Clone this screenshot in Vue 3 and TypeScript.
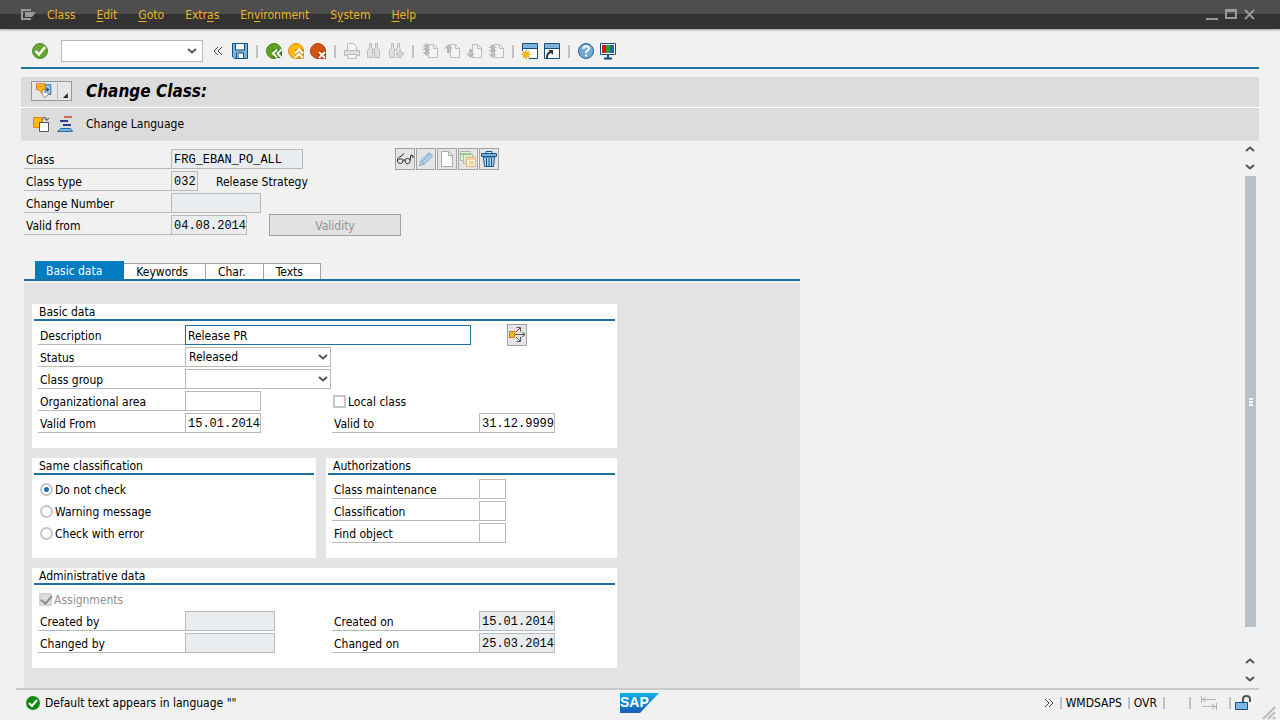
<script setup lang="ts">
import { ref } from 'vue'

interface MenuItem {
  before: string
  key: string
  after: string
}

const menus: MenuItem[] = [
  { before: 'Class', key: '', after: '' },
  { before: '', key: 'E', after: 'dit' },
  { before: '', key: 'G', after: 'oto' },
  { before: 'Extr', key: 'a', after: 's' },
  { before: 'En', key: 'v', after: 'ironment' },
  { before: 'S', key: 'y', after: 'stem' },
  { before: '', key: 'H', after: 'elp' },
]

const page = '<path d="M7.500 2.500h5l4 4v9h-9z" fill="#f4f4f4" stroke="#bcbcbc"/><path d="M12.500 2.500v4h4" fill="none" stroke="#bcbcbc"/>'
const binocular =
  '<path d="M4.500 1.500h2v4l1 1v9h-5v-7l2-3zM10.500 1.500h2v4l2 3v7h-5v-9l1-1z" fill="#e0e0e0" stroke="#bcbcbc"/><path d="M7 7.500h3M7 10.500h3" stroke="#bcbcbc"/>'

const icons: Record<string, string> = {
  save:
    '<path d="M1.500 1.500h15v15h-13l-2-2z" fill="#7fb2da" stroke="#12517f"/><path d="M4.500 2v6h9V2" fill="#f5fafd" stroke="#12517f"/><path d="M5.500 16v-5h7v5" fill="#f5fafd" stroke="#12517f"/><path d="M6 12h2v4H6z" fill="#7fb2da"/>',
  back:
    '<circle cx="9" cy="9" r="7.500" fill="#5da11f" stroke="#43821a"/><path d="M8 7h9v9H8z" fill="#3b7a14"/><path d="M12 7.500l-4 4 4 4M16.500 7.500l-4 4 4 4" fill="none" stroke="#fff" stroke-width="2"/>',
  exit:
    '<circle cx="9" cy="9" r="7.500" fill="#fcb815" stroke="#dc8d05"/><path d="M8 7h9v10H8z" fill="#d8900c"/><path d="M8 11.500l4-4 4 4M8 16l4-4 4 4" fill="none" stroke="#fff" stroke-width="2"/>',
  cancel:
    '<circle cx="9" cy="9" r="7.500" fill="#d65215" stroke="#b43f0c"/><path d="M9 9h8v8H9z" fill="#b33c0a"/><path d="M10 10l6 6M16 10l-6 6" stroke="#fff" stroke-width="2"/>',
  print:
    '<path d="M4.500 8.500v-7h6l3 3v4" fill="#f5f5f5" stroke="#bcbcbc"/><path d="M1.500 8.500h15v5h-15z" fill="#dedede" stroke="#bcbcbc"/><path d="M4.500 12.500h9v4h-9z" fill="#f5f5f5" stroke="#bcbcbc"/>',
  find: binocular,
  findNext: binocular + '<path d="M13 7v10M8 12h10" stroke="#f2f2f2" stroke-width="5"/><path d="M13 8v8M9 12h8" stroke="#bcbcbc" stroke-width="3"/><path d="M13 9v6M10 12h6" stroke="#e2e2e2"/>',
  first: page + '<path d="M5.500 1l4 4h-8zM5.500 4l4 4h-8zM4 7h3v3H4zM1.500 10h8l-4 4z" fill="#b8b8b8"/>',
  prev: page + '<path d="M5.500 2l4.500 4.500H1zM4 6h3v5H4z" fill="#b8b8b8"/>',
  next: page + '<path d="M5.500 16l4.500-4.500H1zM4 7h3v5H4z" fill="#b8b8b8"/>',
  last: page + '<path d="M5.500 2l4 4h-8zM4 6h3v4H4zM1.500 8h8l-4 4zM1.500 12h8l-4 4z" fill="#b8b8b8"/>',
  session:
    '<path d="M1.500 1.500h15v15h-15z" fill="#fff" stroke="#12517f"/><path d="M2 2h14v4H2z" fill="#7fb2da"/><path d="M1 6.500h16" stroke="#12517f"/><path d="M0 9h8v9H0z" fill="#f2f2f2"/><path d="M5 8v9M.500 12.500h9M2 9.500l6 6M8 9.500l-6 6" stroke="#f0a30a" stroke-width="1.500"/><circle cx="5" cy="12.500" r="2.500" fill="#fbb418"/>',
  shortcut:
    '<path d="M1.500 1.500h15v15h-15z" fill="#fff" stroke="#12517f"/><path d="M2 2h14v4H2z" fill="#7fb2da"/><path d="M1 6.500h16" stroke="#12517f"/><path d="M4 16c0-4 1-5 4-6" fill="none" stroke="#333" stroke-width="2"/><path d="M5 8h5v5z" fill="#333"/>',
  help:
    '<circle cx="9" cy="9" r="7.500" fill="#73a9d2" stroke="#23618f"/><path d="M6.500 7c0-3.500 5.500-3.500 5.500-.500 0 2-3 2-3 4.500M9 12.500v2" fill="none" stroke="#fff" stroke-width="2"/>',
  layout:
    '<path d="M1.500 1.500h15v11h-15z" fill="#fff" stroke="#12517f"/><path d="M3 3h4v8H3z" fill="#d31e18"/><path d="M7 3h4v8H7z" fill="#3a9b23"/><path d="M11 3h4v8h-4z" fill="#126db0"/><path d="M9 13v3M5 16.500h8" stroke="#12517f" stroke-width="2"/>',
  check:
    '<circle cx="9" cy="9" r="7.500" fill="#64a633" stroke="#4f8a2b"/><path d="M4.500 9l3.500 3.500L14 5" fill="none" stroke="#fff" stroke-width="2.500"/>',
  display:
    '<path d="M1.500 9L8 3.500M1.500 9c-1 5 5 6 5.500 2 0-2-3-3-4-1M7 10.500c1-1 2-1 2 0M9 10c0 6 6 4 5 0-1-2-4-2-5 0M14 10l1-5 2 1v2" fill="none" stroke="#1a1a1a"/>',
  edit:
    '<path d="M2.500 15.500l1.500-5 8-8 3.500 3.500-8 8z" fill="#b2d2e8" stroke="#86aec9"/><path d="M4 11l3 3M5 12l8-8" stroke="#7caaca"/>',
  create: '<path d="M3.500 1.500h7l4 4v11h-11z" fill="#fdfdfd" stroke="#aaa"/><path d="M10.500 1.500v4h4" fill="none" stroke="#aaa"/>',
  copy:
    '<path d="M1.500 1.500h10v9h-10z" fill="#e6f2de" stroke="#a1c38f"/><path d="M1.500 4h10" stroke="#a1c38f" stroke-width="2"/><path d="M4.500 4.500h9v9h-9z" fill="#dcebd3" stroke="#a1c38f"/><path d="M7.500 7.500h9v9h-9z" fill="#fff0d8" stroke="#e9b67d"/><path d="M8 9h8M10 12h5M10 14h5" stroke="#e9b67d"/>',
  trash:
    '<path d="M6 3V1.500h6V3" fill="none" stroke="#165a8d"/><path d="M1.500 3.500h15v3h-15z" fill="#79b1dc" stroke="#165a8d"/><path d="M3.500 7h11l-1 9.500h-9z" fill="#a9cfea" stroke="#165a8d"/><path d="M6.500 8v8M9 8v8M11.500 8v8" stroke="#165a8d"/>',
  other:
    '<path d="M1.500 2.500h9v10h-9z" fill="#fbb615" stroke="#df8b0c"/><path d="M7.500 7.500h9v9h-9z" fill="#fff" stroke="#555"/><path d="M10 5c1-4 5-3 5 0M12.500 3.500l2.500 2 2-2.500" fill="none" stroke="#555"/>',
  hierarchy:
    '<path d="M8 2h8" stroke="#c8704b" stroke-width="2"/><path d="M4 6h8M7 10h8" stroke="#26458b" stroke-width="2"/><path d="M4.500 13.500h10l2 3h-15z" fill="#7fb2da" stroke="#1c70a8"/>',
  assist:
    '<path d="M10.500 2.500h6v10h-6z" fill="#9ac6e6" stroke="#2470a4"/><path d="M12 5l3 2.500-3 2.500z" fill="#124c78"/><path d="M1.500 1.500h9v6h-3v4l-4-4h-2z" fill="#ffbf25" stroke="#d37a0c"/><path d="M3 4.500h6" stroke="#b45b10" stroke-dasharray="1 1"/><path d="M7 11l3 5 4-3-1-2" fill="#fff" stroke="#888"/>',
  multi:
    '<path d="M1.500 5.500h5v6h-5z" fill="#fbb92b" stroke="#cf7913"/><path d="M7 8.500h10M14 6l3 2.500-3 2.500M8 6l4-4M8.500 1.500h4v4M8 11l4 4M12.500 11v4.500h-4" fill="none" stroke="#555"/>',
}

const toolbar: string[] = [
  'save', '|', 'back', 'exit', 'cancel', '|', 'print', 'find', 'findNext', '|',
  'first', 'prev', 'next', 'last', '|', 'session', 'shortcut', '|', 'help', 'layout',
]
const unavailable = ['print', 'find', 'findNext', 'first', 'prev', 'next', 'last']
const objectTools = ['display', 'edit', 'create', 'copy', 'trash']

const tabs = ['Basic data', 'Keywords', 'Char.', 'Texts']
const activeTab = ref('Basic data')

const command = ref('')
const description = ref('Release PR')
const status = ref('Released')
const classGroup = ref('')
const orgArea = ref('')
const localClass = ref(false)
const validFrom = ref('15.01.2014')
const validTo = ref('31.12.9999')

const checks = ['Do not check', 'Warning message', 'Check with error']
const check = ref('Do not check')
const authorizations = ['Class maintenance', 'Classification', 'Find object']
</script>

<template>
  <div class="window">
    <header class="menubar">
      <svg class="menu-icon" viewBox="0 0 16 13" aria-hidden="true">
        <path d="M10 2H1v9h9" fill="none" stroke="#999" stroke-width="2" />
        <path d="M4 4h11l-4 5H4z" fill="#999" />
      </svg>
      <nav class="menus">
        <button v-for="m in menus" :key="m.before + m.key" type="button" class="menu">{{ m.before }}<u v-if="m.key">{{ m.key }}</u>{{ m.after }}</button>
      </nav>
      <div class="controls">
        <button type="button" aria-label="Minimize"><svg viewBox="0 0 12 12"><path d="M0 10h12" stroke="#999" stroke-width="2" /></svg></button>
        <button type="button" aria-label="Maximize"><svg viewBox="0 0 12 12"><path d="M1 1h10v8H1zM1 2h10" fill="none" stroke="#999" stroke-width="2" /></svg></button>
        <button type="button" aria-label="Close"><svg viewBox="0 0 12 12"><path d="M1 1l9 9M10 1l-9 9" stroke="#999" stroke-width="2" /></svg></button>
      </div>
    </header>

    <div class="toolbar">
      <button type="button" class="tool" aria-label="Enter"><svg viewBox="0 0 18 18" v-html="icons.check" /></button>
      <div class="select command">
        <input v-model="command" type="text" aria-label="Command" />
        <svg class="chevron" viewBox="0 0 10 6"><path d="M1 1l4 3.500L9 1" /></svg>
      </div>
      <button type="button" class="collapse" aria-label="Hide command field">
        <svg viewBox="0 0 10 10"><path d="M5 1L1 5l4 4M9 1L5 5l4 4" fill="none" stroke="#444" /></svg>
      </button>
      <template v-for="(t, i) in toolbar" :key="i">
        <span v-if="t === '|'" class="sep" />
        <button v-else type="button" class="tool" :aria-label="t" :disabled="unavailable.includes(t)">
          <svg viewBox="0 0 18 18" v-html="icons[t]" />
        </button>
      </template>
    </div>

    <div class="titlebar">
      <button type="button" class="services" aria-label="Services for object">
        <svg class="assist" viewBox="0 0 18 18" v-html="icons.assist" />
        <span class="split" />
        <svg class="corner" viewBox="0 0 5 5"><path d="M5 0v5H0z" fill="#222" /></svg>
      </button>
      <h1>Change Class:</h1>
    </div>
    <div class="appbar">
      <button type="button" class="tool" aria-label="Other class"><svg viewBox="0 0 18 18" v-html="icons.other" /></button>
      <button type="button" class="tool" aria-label="Hierarchy"><svg viewBox="0 0 18 18" v-html="icons.hierarchy" /></button>
      <button type="button" class="language">Change Language</button>
    </div>

    <div class="body">
      <main class="content">
        <form class="head" @submit.prevent>
          <div class="row">
            <label for="class">Class</label>
            <input id="class" class="mono w-class" value="FRG_EBAN_PO_ALL" readonly />
            <div class="object-tools">
              <button v-for="t in objectTools" :key="t" type="button" class="icon-button" :aria-label="t">
                <svg viewBox="0 0 18 18" v-html="icons[t]" />
              </button>
            </div>
          </div>
          <div class="row">
            <label for="type">Class type</label>
            <input id="type" class="mono w-code" value="032" readonly />
            <span class="note">Release Strategy</span>
          </div>
          <div class="row">
            <label for="number">Change Number</label>
            <input id="number" class="mono w-user" value="" readonly />
          </div>
          <div class="row">
            <label for="from">Valid from</label>
            <input id="from" class="mono w-date" value="04.08.2014" readonly />
            <button type="button" class="validity" disabled>Validity</button>
          </div>
        </form>

        <div class="tabs" role="tablist">
          <button
            v-for="t in tabs"
            :key="t"
            type="button"
            role="tab"
            class="tab"
            :class="{ active: t === activeTab }"
            :aria-selected="t === activeTab"
            @click="activeTab = t"
          >{{ t }}</button>
        </div>

        <section class="panel" role="tabpanel">
          <div class="groups">
            <section class="group wide">
              <h2>Basic data</h2>
              <div class="rows">
                <div class="row">
                  <label for="desc">Description</label>
                  <input id="desc" v-model="description" class="w-desc" />
                  <button type="button" class="icon-button multi" aria-label="Maintain texts">
                    <svg viewBox="0 0 18 18" v-html="icons.multi" />
                  </button>
                </div>
                <div class="row">
                  <label for="status">Status</label>
                  <div class="select">
                    <select id="status" v-model="status">
                      <option>Released</option>
                      <option>Locked</option>
                    </select>
                    <svg class="chevron" viewBox="0 0 10 6"><path d="M1 1l4 3.500L9 1" /></svg>
                  </div>
                </div>
                <div class="row">
                  <label for="group">Class group</label>
                  <div class="select">
                    <select id="group" v-model="classGroup"><option value=""></option></select>
                    <svg class="chevron" viewBox="0 0 10 6"><path d="M1 1l4 3.500L9 1" /></svg>
                  </div>
                </div>
                <div class="pair">
                  <div class="row">
                    <label for="org">Organizational area</label>
                    <input id="org" v-model="orgArea" class="mono w-date" />
                  </div>
                  <label class="tick"><input v-model="localClass" type="checkbox" />Local class</label>
                </div>
                <div class="pair">
                  <div class="row">
                    <label for="vfrom">Valid From</label>
                    <input id="vfrom" v-model="validFrom" class="mono w-date" />
                  </div>
                  <div class="row">
                    <label for="vto">Valid to</label>
                    <input id="vto" v-model="validTo" class="mono w-date" />
                  </div>
                </div>
              </div>
            </section>

            <section class="group">
              <h2>Same classification</h2>
              <div class="rows">
                <label v-for="c in checks" :key="c" class="tick radio">
                  <input v-model="check" type="radio" name="check" :value="c" />{{ c }}
                </label>
              </div>
            </section>

            <section class="group">
              <h2>Authorizations</h2>
              <div class="rows">
                <div v-for="(a, i) in authorizations" :key="a" class="row">
                  <label :for="'auth' + i">{{ a }}</label>
                  <input :id="'auth' + i" class="mono w-code" />
                </div>
              </div>
            </section>

            <section class="group wide">
              <h2>Administrative data</h2>
              <div class="rows">
                <label class="tick off"><input type="checkbox" checked disabled />Assignments</label>
                <div class="pair">
                  <div class="row">
                    <label for="cby">Created by</label>
                    <input id="cby" class="mono w-user" readonly />
                  </div>
                  <div class="row">
                    <label for="con">Created on</label>
                    <input id="con" class="mono w-date" value="15.01.2014" readonly />
                  </div>
                </div>
                <div class="pair">
                  <div class="row">
                    <label for="chby">Changed by</label>
                    <input id="chby" class="mono w-user" readonly />
                  </div>
                  <div class="row">
                    <label for="chon">Changed on</label>
                    <input id="chon" class="mono w-date" value="25.03.2014" readonly />
                  </div>
                </div>
              </div>
            </section>
          </div>
        </section>
      </main>

      <div class="scrollbar">
        <button type="button" aria-label="Scroll up"><svg class="arrow" viewBox="0 0 10 6"><path d="M1 5l4-3.500L9 5" /></svg></button>
        <button type="button" aria-label="Line down"><svg class="arrow" viewBox="0 0 10 6"><path d="M1 1l4 3.500L9 1" /></svg></button>
        <div class="track"><div class="thumb"><i /><i /><i /></div></div>
        <button type="button" aria-label="Line up"><svg class="arrow" viewBox="0 0 10 6"><path d="M1 5l4-3.500L9 5" /></svg></button>
        <button type="button" aria-label="Scroll down"><svg class="arrow" viewBox="0 0 10 6"><path d="M1 1l4 3.500L9 1" /></svg></button>
      </div>
    </div>

    <footer class="statusbar">
      <div class="message">
        <svg viewBox="0 0 14 14"><circle cx="7" cy="7" r="7" fill="#128a12" /><path d="M3 7l3 3 5-6" fill="none" stroke="#fff" stroke-width="2" /></svg>
        <span>Default text appears in language ""</span>
      </div>
      <svg class="logo" viewBox="0 0 39 20" role="img" aria-label="SAP">
        <defs>
          <linearGradient id="sap" x1="0" y1="0" x2="0" y2="1">
            <stop offset="0" stop-color="#0bb0ea" />
            <stop offset="1" stop-color="#1d5cb6" />
          </linearGradient>
        </defs>
        <path d="M0 0h39L20 20H0z" fill="url(#sap)" />
        <text x="0" y="14">SAP</text>
      </svg>
      <div class="system">
        <svg class="more" viewBox="0 0 10 10"><path d="M1 1l4 4-4 4M5 1l4 4-4 4" fill="none" stroke="#444" /></svg>
        <span class="cell">WMDSAPS</span>
        <span class="cell">OVR</span>
        <span class="cell blank" />
        <span class="cell">
          <svg class="transfer" viewBox="0 0 18 14"><path d="M1.500 0v7M2 3.500h14M6 1L2.500 3.500 6 6M16.500 7v7M2 10.500h14M12 8l3.500 2.500L12 13" fill="none" stroke="#b5b5b5" /></svg>
        </span>
        <span class="cell">
          <svg class="lock" viewBox="0 0 17 16"><path d="M8 7V4c0-4 7-4 7 0v3" fill="none" stroke="#555" stroke-width="2" /><path d="M.500 7.500h12v7H.500z" fill="#7db6e0" stroke="#12517f" /></svg>
        </span>
      </div>
      <svg class="grip" viewBox="0 0 14 14"><path d="M1 13L13 1M6 13l7-7M11 13l2-2" stroke="#bbb" stroke-width="2" /></svg>
    </footer>
  </div>
</template>

<style>
body {
  margin: 0;
  background: #f1f1f1;
}
</style>

<style scoped>
.window {
  display: flex;
  flex-direction: column;
  min-height: 100vh;
  background: #f1f1f1;
  color: #000;
  font: 12px/16px "DejaVu Sans Condensed", "Noto Sans", sans-serif;
}
.window * {
  box-sizing: border-box;
}
button,
input,
select {
  margin: 0;
  padding: 0;
  border: 0;
  border-radius: 0;
  outline: 0;
  background: none;
  color: inherit;
  font: inherit;
}
svg {
  display: block;
}
h1,
h2 {
  margin: 0;
}

/* Menu bar */
.menubar {
  display: flex;
  align-items: center;
  height: 29px;
  padding: 0 24px 0 21px;
  background: linear-gradient(#4e4e4e 14px, #333 14px);
  box-shadow: 0 1px 2px #999;
}
.menu-icon {
  width: 16px;
  height: 13px;
}
.menus {
  display: flex;
  flex: 1;
  gap: 21px;
  padding-left: 10px;
}
.menu {
  color: #ecb51d;
}
.menu u {
  text-underline-offset: 2px;
}
.controls {
  display: flex;
  gap: 7px;
}
.controls svg {
  width: 12px;
  height: 12px;
}

/* System toolbar */
.toolbar {
  display: flex;
  align-items: center;
  gap: 4px;
  height: 40px;
  margin: 0 21px;
  padding: 6px 0 0 10px;
  border-bottom: 2px solid #1f719f;
}
.tool svg {
  width: 18px;
  height: 18px;
}
.sep {
  width: 2px;
  height: 13px;
  margin: 0 3px;
  background: #c2c2c2;
}
.select {
  position: relative;
  width: 146px;
}
.select select,
.select input {
  display: block;
  width: 100%;
  height: 20px;
  padding: 0 20px 1px 3px;
  border: 1px solid #b9b9b9;
  background: #fff;
  appearance: none;
}
.command {
  width: 142px;
  margin: 0 6px 0 8px;
}
.select.command input {
  height: 22px;
}
.chevron {
  position: absolute;
  top: 50%;
  right: 3px;
  width: 10px;
  height: 6px;
  margin-top: -3px;
  pointer-events: none;
}
.command .chevron {
  right: 6px;
}
.chevron path,
.arrow path {
  fill: none;
  stroke: #555;
  stroke-width: 2;
}
.collapse {
  margin-right: 4px;
}
.collapse svg,
.more {
  width: 10px;
  height: 10px;
}

/* Title and application toolbar */
.titlebar {
  display: flex;
  align-items: center;
  height: 30px;
  margin: 8px 21px 1px;
  padding: 0 10px 2px;
  background: #dcdcdc;
  box-shadow: 0 1px #fff;
}
.services {
  display: flex;
  align-items: center;
  width: 41px;
  height: 20px;
  padding: 0 3px;
  border: 1px solid #8e9ba5;
  background: #e6e6e6;
}
.assist {
  width: 18px;
  height: 18px;
}
.split {
  width: 1px;
  height: 16px;
  margin: 0 5px;
  background: #bbb;
}
.corner {
  width: 5px;
  height: 5px;
  margin-top: 8px;
}
h1 {
  padding-left: 14px;
  font: italic bold 17px/20px "DejaVu Sans Condensed", "Noto Sans", sans-serif;
}
.appbar {
  display: flex;
  align-items: center;
  gap: 6px;
  height: 33px;
  margin: 0 21px;
  padding: 0 11px;
  border-bottom: 1px solid #e0e0e0;
  background: #dcdcdc;
}
.language {
  padding-left: 6px;
}

/* Work area */
.body {
  display: flex;
  flex: 1;
  margin: 0 21px 0 16px;
  padding-left: 8px;
  border-bottom: 2px solid #c9c9c9;
}
.content {
  display: flex;
  flex: 1;
  flex-direction: column;
}
.head {
  display: flex;
  flex-direction: column;
  gap: 2px;
  padding-top: 8px;
}
.row {
  display: flex;
  align-items: center;
  height: 20px;
}
.row label {
  align-self: stretch;
  width: 147px;
  padding: 3px 0 0 2px;
  border-bottom: 1px solid #b9b9b9;
}
.row input {
  align-self: stretch;
  padding: 1px 0 0 2px;
  border: 1px solid #b9b9b9;
  background: #fff;
}
.row input[readonly] {
  background: #e9edf0;
}
.row .mono {
  font: 12px/16px "Liberation Mono", monospace;
}
.row .w-class {
  width: 132px;
}
.w-code {
  width: 27px;
}
.w-user {
  width: 90px;
}
.w-date {
  width: 76px;
}
.row .w-desc {
  width: 286px;
  border-color: #1f719f;
}
.note {
  padding: 2px 0 0 18px;
}
.object-tools {
  display: flex;
  gap: 1px;
  margin-left: 92px;
}
.icon-button {
  display: grid;
  place-items: center;
  width: 20px;
  height: 22px;
  border: 1px solid #a3a3a3;
  background: #e4e4e4;
}
.icon-button svg {
  width: 18px;
  height: 18px;
}
.multi {
  margin-left: 36px;
}
.validity {
  width: 132px;
  height: 22px;
  margin-left: 22px;
  padding-top: 2px;
  border: 1px solid #a3a3a3;
  background: #e2e2e2;
  color: #929292;
}

/* Tabs */
.tabs {
  display: flex;
  align-items: flex-end;
  max-width: 776px;
  margin-top: 26px;
  padding-left: 11px;
  border-bottom: 2px solid #1f719f;
}
.tab {
  height: 16px;
  padding: 1px 17px 0 12px;
  border: 1px solid #a3a3a3;
  border-width: 1px 1px 0 0;
  background: #fff;
  line-height: 15px;
}
.tab.active {
  height: 18px;
  padding: 3px 22px 0 11px;
  border: 0;
  background: #007cc3;
  color: #fff;
}
.panel {
  flex: 1;
  max-width: 776px;
  margin-top: 2px;
  padding: 21px 8px 20px;
  background: #e4e4e4;
}
.groups {
  display: grid;
  grid-template-columns: 284px 291px;
  gap: 10px;
}
.group {
  padding: 0 2px 15px;
  background: #fff;
}
.wide {
  grid-column: 1 / -1;
}
h2 {
  height: 17px;
  padding-left: 5px;
  border-bottom: 2px solid #1f719f;
  font: 12px/16px "DejaVu Sans Condensed", "Noto Sans", sans-serif;
}
.rows {
  display: flex;
  flex-direction: column;
  gap: 2px;
  padding: 4px 4px 0;
}
.pair {
  display: grid;
  grid-template-columns: 294px 1fr;
}
.tick {
  display: flex;
  align-items: center;
  gap: 2px;
  height: 20px;
  padding: 1px 0 0 1px;
}
.tick input {
  width: 13px;
  height: 13px;
  border: 2px solid #c6c6c6;
  background: #fff;
  appearance: none;
}
.radio input {
  border-radius: 50%;
}
.radio {
  padding-left: 2px;
}
.radio input:checked {
  background: radial-gradient(circle, #1374b5 2px, #fff 3px);
}
.off {
  color: #929292;
}
.off input {
  display: grid;
  align-items: start;
  justify-items: center;
  border-color: #d4d4d4;
  background: #dedede;
}
.off input::before {
  width: 9px;
  height: 5px;
  border: solid #8c8c8c;
  border-width: 0 0 2px 2px;
  content: "";
  transform: rotate(-50deg);
}

/* Scroll bar */
.scrollbar {
  display: flex;
  flex-direction: column;
  width: 11px;
  margin: -1px 3px 0 0;
}
.scrollbar button {
  display: grid;
  align-items: center;
  height: 18px;
}
.arrow {
  width: 10px;
  height: 6px;
}
.track {
  flex: 1;
  width: 100%;
  padding-bottom: 25px;
}
.thumb {
  display: flex;
  flex-direction: column;
  align-items: center;
  justify-content: center;
  gap: 1px;
  height: 100%;
  background: #b5c0ca;
}
.thumb i {
  width: 4px;
  height: 2px;
  background: #fff;
}

/* Status bar */
.statusbar {
  display: flex;
  align-items: center;
  height: 30px;
  padding: 0 4px 4px 26px;
}
.message {
  display: flex;
  flex: 1;
  align-items: center;
  gap: 5px;
}
.message svg {
  width: 14px;
  height: 14px;
}
.logo {
  width: 39px;
  height: 20px;
}
.logo text {
  fill: #fff;
  font: bold 14px "Liberation Sans", sans-serif;
}
.system {
  display: flex;
  flex: 1;
  align-items: center;
  justify-content: flex-end;
  gap: 6px;
}
.cell {
  display: flex;
  align-items: center;
  gap: 4px;
}
.cell::before {
  width: 2px;
  height: 12px;
  background: #c2c2c2;
  content: "";
}
.blank {
  width: 20px;
}
.transfer {
  width: 18px;
  height: 14px;
  margin: 0 5px;
}
.lock {
  width: 17px;
  height: 16px;
}
.grip {
  align-self: flex-end;
  width: 14px;
  height: 14px;
  margin: 0 0 -4px 10px;
}
</style>
